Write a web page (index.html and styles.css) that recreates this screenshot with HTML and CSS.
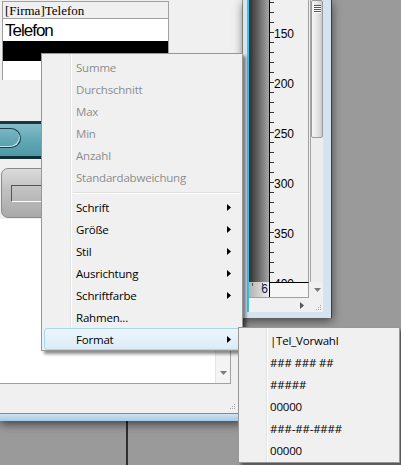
FILE: index.html
```html
<!DOCTYPE html>
<html>
<head>
<meta charset="utf-8">
<link rel="stylesheet" href="styles.css">
</head>
<body>
<div class="desk">
  <div class="desk-edge"></div>

  <div class="win-left">
    <div class="client">
      <div class="grid">
        <div class="grid-head">[Firma]Telefon</div>
        <div class="grid-cell">Telefon</div>
        <div class="grid-sel"></div>
        <div class="grid-empty"></div>
      </div>
      <div class="toolbar"><div class="tb-pill"></div></div>
      <div class="gbtn"><div class="gbtn-inner"></div></div>
      <div class="memo">
        <div class="memo-body"></div>
        <div class="memo-scroll"><svg class="tri-down" width="7" height="4" viewBox="0 0 7 4"><path d="M0 0H7L3.5 4Z"/></svg></div>
      </div>
      <div class="statusrow">
        <svg class="grip" width="6" height="6" viewBox="0 0 6 6"><rect x="4" y="0" width="1" height="1"/><rect x="2" y="2" width="1" height="1"/><rect x="4" y="2" width="1" height="1"/><rect x="0" y="4" width="1" height="1"/><rect x="2" y="4" width="1" height="1"/><rect x="4" y="4" width="1" height="1"/></svg>
      </div>
    </div>
    <div class="frame-bottom"></div>
  </div>

  <div class="win-ruler">
    <div class="rw-row">
      <div class="rf-left"></div>
      <div class="r-client">
        <div class="ruler-cell">
          <svg class="ruler" width="59" height="282" viewBox="0 0 59 282">
            <defs>
              <linearGradient id="rg" x1="0" x2="1" y1="0" y2="0">
                <stop offset="0" stop-color="#2e2e2e"/>
                <stop offset="1" stop-color="#a6a6a6"/>
              </linearGradient>
            </defs>
            <rect x="0" y="0" width="20" height="282" fill="url(#rg)"/>
            <rect x="20" y="0" width="1" height="282" fill="#000"/>
            <g fill="#333">
              <rect x="21" y="2" width="4" height="1"/><rect x="21" y="12" width="4" height="1"/><rect x="21" y="22" width="4" height="1"/><rect x="21" y="32" width="4" height="1"/><rect x="21" y="42" width="4" height="1"/><rect x="21" y="52" width="4" height="1"/><rect x="21" y="62" width="4" height="1"/><rect x="21" y="72" width="4" height="1"/><rect x="21" y="82" width="4" height="1"/><rect x="21" y="92" width="4" height="1"/>
              <rect x="21" y="102" width="4" height="1"/><rect x="21" y="112" width="4" height="1"/><rect x="21" y="122" width="4" height="1"/><rect x="21" y="132" width="4" height="1"/><rect x="21" y="142" width="4" height="1"/><rect x="21" y="152" width="4" height="1"/><rect x="21" y="162" width="4" height="1"/><rect x="21" y="172" width="4" height="1"/><rect x="21" y="182" width="4" height="1"/><rect x="21" y="192" width="4" height="1"/>
              <rect x="21" y="202" width="4" height="1"/><rect x="21" y="212" width="4" height="1"/><rect x="21" y="222" width="4" height="1"/><rect x="21" y="232" width="4" height="1"/><rect x="21" y="242" width="4" height="1"/><rect x="21" y="252" width="4" height="1"/><rect x="21" y="262" width="4" height="1"/><rect x="21" y="272" width="4" height="1"/>
            </g>
            <g class="rlabel">
              <text x="25" y="38">150</text>
              <text x="25" y="88">200</text>
              <text x="25" y="138">250</text>
              <text x="25" y="188">300</text>
              <text x="25" y="238">350</text>
              <text x="25" y="288">400</text>
            </g>
          </svg>
        </div>
        <div class="vscroll"><div class="thumb"><span></span><span></span><span></span><span></span></div></div>
        <div class="corner-row">
          <div class="sixbox"><span class="tk tk1"></span><span class="tk tk2"></span>6</div>
          <div class="zoombox"></div>
        </div>
        <div class="dd-cell"><svg class="tri-down" width="7" height="4" viewBox="0 0 7 4"><path d="M0 0H7L3.5 4Z"/></svg></div>
        <div class="status2">
          <svg class="tri-right" width="4" height="7" viewBox="0 0 4 7"><path d="M0 0L4 3.5L0 7Z"/></svg>
          <svg class="grip" width="6" height="6" viewBox="0 0 6 6"><rect x="4" y="0" width="1" height="1"/><rect x="2" y="2" width="1" height="1"/><rect x="4" y="2" width="1" height="1"/><rect x="0" y="4" width="1" height="1"/><rect x="2" y="4" width="1" height="1"/><rect x="4" y="4" width="1" height="1"/></svg>
        </div>
      </div>
      <div class="rf-right"></div>
    </div>
    <div class="rf-bottom"></div>
  </div>

  <div class="menu">
    <div class="mi dis">Summe</div>
    <div class="mi dis">Durchschnitt</div>
    <div class="mi dis">Max</div>
    <div class="mi dis">Min</div>
    <div class="mi dis">Anzahl</div>
    <div class="mi dis">Standardabweichung</div>
    <div class="msep"></div>
    <div class="mi">Schrift<svg class="arr" width="4" height="7" viewBox="0 0 4 7"><path d="M0 0L4 3.5L0 7Z"/></svg></div>
    <div class="mi">Größe<svg class="arr" width="4" height="7" viewBox="0 0 4 7"><path d="M0 0L4 3.5L0 7Z"/></svg></div>
    <div class="mi">Stil<svg class="arr" width="4" height="7" viewBox="0 0 4 7"><path d="M0 0L4 3.5L0 7Z"/></svg></div>
    <div class="mi">Ausrichtung<svg class="arr" width="4" height="7" viewBox="0 0 4 7"><path d="M0 0L4 3.5L0 7Z"/></svg></div>
    <div class="mi">Schriftfarbe<svg class="arr" width="4" height="7" viewBox="0 0 4 7"><path d="M0 0L4 3.5L0 7Z"/></svg></div>
    <div class="mi">Rahmen...</div>
    <div class="mi hot">Format<svg class="arr" width="4" height="7" viewBox="0 0 4 7"><path d="M0 0L4 3.5L0 7Z"/></svg></div>
  </div>

  <div class="submenu">
    <div class="si">|Tel_Vorwahl</div>
    <div class="si">### ### ##</div>
    <div class="si">#####</div>
    <div class="si">00000</div>
    <div class="si">###-##-####</div>
    <div class="si">00000</div>
  </div>
</div>
</body>
</html>
```

FILE: styles.css
```css
* { box-sizing: border-box; margin: 0; padding: 0; }
html, body { width: 401px; height: 465px; overflow: hidden; }
body { background: #9a9a9a; font-family: "Open Sans", sans-serif; font-size: 12px; color: #000; }

.desk { position: relative; width: 401px; height: 465px; overflow: hidden; background: #9a9a9a; }
.desk-edge { position: absolute; left: 126px; top: 420px; width: 2px; height: 45px; background: #2e2e2e; }

/* ---------- left window ---------- */
.win-left { position: absolute; left: 0; top: 0; width: 243px; height: 421px; display: flex; flex-direction: column; box-shadow: 0 3px 9px rgba(0,0,0,.6); }
.client { height: 413px; flex: none; background: #f0f0f0; border-right: 1px solid #a0a0a0; display: flex; flex-direction: column; }
.frame-bottom { height: 8px; flex: none; border-top: 1px solid #7d8b97; background: linear-gradient(#cfe2f2, #b9d4ec 55%, #a8c8e4); }

.grid { margin: 1px 0 0 2px; width: 167px; height: 79px; flex: none; border: 1px solid #a0a0a0; border-bottom: 0; background: #fff; display: flex; flex-direction: column; }
.grid-head { height: 17px; flex: none; background: #f0f0f0; border-bottom: 1px solid #a0a0a0; font: 13px/16px "Liberation Serif", serif; padding: 1px 0 0 2px; }
.grid-cell { height: 22px; flex: none; font: 17px/24px "Liberation Sans", Arial, sans-serif; letter-spacing: -1px; padding-left: 2px; }
.grid-sel { height: 20px; flex: none; background: #000; }
.grid-empty { flex: 1; background: #fff; }

.toolbar { margin-top: 41px; height: 38px; flex: none; border-top: 3px solid #173841; border-bottom: 3px solid #102f37; background: linear-gradient(#84bdc9, #63a8b5 50%, #4e98a6); padding-top: 4px; }
.tb-pill { width: 21px; height: 20px; border: 1px solid #1d3c46; border-left: 0; border-radius: 0 10px 10px 0; box-shadow: inset -1px -1px 0 #c2e2ea; }

.gbtn { margin: 9px 0 0 1px; height: 50px; width: 232px; flex: none; border: 1px solid #8a8a8a; border-radius: 7px; background: linear-gradient(#dcdcdc, #c2c2c2 40%, #a9a9a9); padding: 16px 0 0 9px; }
.gbtn-inner { height: 17px; border: 1px solid #555; border-right: 0; border-bottom: 1px solid #fff; }

.memo { margin-top: 1px; height: 165px; width: 231px; flex: none; border-right: 1px solid #a0a0a0; border-bottom: 1px solid #a0a0a0; background: #fff; display: flex; }
.memo-body { flex: 1; }
.memo-scroll { width: 15px; background: #f4f4f4; border-left: 1px solid #e6e6e6; display: flex; flex-direction: column; justify-content: flex-end; align-items: center; padding-bottom: 8px; }
.tri-down { display: block; fill: #7a7a7a; }

.statusrow { flex: 1; display: flex; justify-content: flex-end; align-items: flex-end; padding: 0 6px 3px 0; }
.grip { display: block; fill: #a8a8a8; }

/* ---------- ruler window ---------- */
.win-ruler { position: absolute; left: 243px; top: 0; width: 89px; height: 318px; display: flex; flex-direction: column; box-shadow: 0 3px 9px rgba(0,0,0,.55); }
.rw-row { display: flex; flex: 1; }
.rf-left { width: 6px; background: linear-gradient(90deg, #d8e4f0 0 4px, #34c4f0 4px); }
.rf-right { width: 9px; background: #d5e3f1; border-right: 1px solid #3c3c3c; }
.rf-bottom { height: 6px; flex: none; background: #d5e3f1; border-right: 1px solid #3c3c3c; }
.r-client { width: 74px; display: grid; grid-template-columns: 60px 14px; grid-template-rows: 282px 16px 14px; background: #f0f0f0; }
.ruler-cell { border-right: 1px solid #a0a0a0; }
.ruler { display: block; }
.rlabel { font: 12px "Liberation Sans", Arial, sans-serif; fill: #000; }
.vscroll { background: linear-gradient(90deg, #f0f0f0 0 1px, #a5a5a5 1px 2px, #ededed 2px); padding-left: 2px; }
.thumb { height: 138px; border: 1px solid #9a9a9a; border-radius: 2px; background: linear-gradient(90deg, #f6f6f6, #e2e2e2 60%, #c9c9c9); display: flex; flex-direction: column; padding: 4px 0 0 2px; }
.thumb span { width: 7px; height: 1px; background: #555; box-shadow: 0 1px 0 #fff; margin-bottom: 1px; }

.corner-row { display: flex; border-bottom: 1px solid #a0a0a0; }
.sixbox { position: relative; width: 20px; background: linear-gradient(90deg, #b2b2b2, #efefef); font: 12px/15px "Liberation Sans", Arial, sans-serif; color: #0c1840; text-align: right; padding-right: 1px; }
.tk { position: absolute; top: 1px; width: 1px; height: 3px; background: #555; }
.tk1 { left: 3px; }
.tk2 { left: 13px; }
.zoombox { flex: 1; border-left: 1px solid #000; border-top: 1px solid #000; border-right: 1px solid #a0a0a0; background: #f6f6f6; }
.dd-cell { display: flex; justify-content: center; align-items: center; padding-left: 2px; }
.status2 { grid-column: 1 / 3; display: flex; align-items: center; padding-left: 51px; }
.status2 .tri-right { display: block; fill: #555; }
.status2 .grip { margin: 5px 0 0 12px; }

/* ---------- context menu ---------- */
.menu { position: absolute; left: 41px; top: 53px; width: 202px; height: 298px; background-color: #f0f0f0; background-image: linear-gradient(90deg, transparent 28px, #e2e3e3 28px 29px, #ffffff 29px 30px, transparent 30px); border: 1px solid #979797; padding: 2px; box-shadow: 3px 3px 3px rgba(0,0,0,.45); font-family: "Open Sans", sans-serif; font-size: 11.5px; letter-spacing: -0.2px; }
.mi { height: 22px; display: flex; align-items: center; justify-content: space-between; padding: 0 8px 0 31px; border: 1px solid transparent; border-radius: 3px; }
.mi.dis { color: #8d8d8d; }
.arr { display: block; fill: #000; }
.mi.hot { border-color: #a8d8ec; background: linear-gradient(#edf5fb, #dcecf7); }
.msep { height: 8px; margin-left: 29px; background: linear-gradient(transparent 4px, #e0e0e0 4px 5px, #fff 5px 6px, transparent 6px); }

.submenu { position: absolute; left: 238px; top: 327px; width: 162px; height: 136px; background-color: #f0f0f0; background-image: linear-gradient(90deg, transparent 27px, #e2e3e3 27px 28px, #ffffff 28px 29px, transparent 29px); border: 1px solid #979797; padding: 1px 2px; box-shadow: 3px 3px 3px rgba(0,0,0,.45); font-family: "Open Sans", sans-serif; font-size: 11.5px; letter-spacing: -0.2px; }
.si { height: 22px; display: flex; align-items: center; padding-left: 29px; }
```
